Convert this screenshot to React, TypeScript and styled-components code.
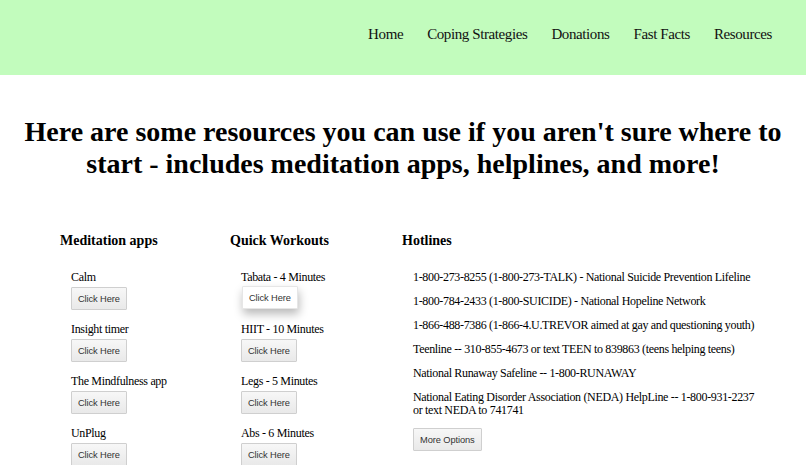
import React from "react";
import styled, { createGlobalStyle } from "styled-components";

const Global = createGlobalStyle`
  html, body { margin: 0; padding: 0; background: #fff; }
  body { font-family: "Liberation Serif", "Times New Roman", serif; color: #000; }
`;

const Header = styled.header`
  height: 75px;
  background: #c2fcbd;
  display: flex;
  align-items: center;
  justify-content: flex-end;
  padding-right: 34px;
  box-sizing: border-box;
`;

const Nav = styled.nav`
  display: flex;
  gap: 24px;
  margin-top: -6px;
`;

const NavLink = styled.a`
  font-size: 15px;
  letter-spacing: -0.4px;
  color: #111;
  text-decoration: none;
`;

const Title = styled.h1`
  margin: 41px 20px 0;
  text-align: center;
  font-size: 28px;
  line-height: 32px;
  font-weight: bold;
`;

const Columns = styled.div`
  display: grid;
  grid-template-columns: 170px 172px 356px;
  padding-left: 60px;
  margin-top: 51px;
`;

const Column = styled.section``;

const Heading = styled.h3`
  margin: 0 0 19px;
  font-size: 14px;
  line-height: 20px;
  font-weight: bold;
`;

const List = styled.ul<{ $offset?: number }>`
  list-style: none;
  margin: 0;
  padding-left: 11px;
  padding-top: ${(p) => p.$offset ?? 0}px;
`;

const Item = styled.li`
  font-size: 12px;
  letter-spacing: -0.33px;
  line-height: 14px;
  margin-bottom: 12px;
`;

const HotItem = styled.li`
  font-size: 12px;
  letter-spacing: -0.33px;
  line-height: 13px;
  margin-bottom: 11px;
`;

const Button = styled.button<{ $hover?: boolean }>`
  display: block;
  margin-top: 3px;
  height: 23px;
  padding: 0 6px;
  font-family: "Liberation Sans", Arial, sans-serif;
  font-size: 9.3px;
  letter-spacing: -0.1px;
  color: #333;
  border: 1px solid ${(p) => (p.$hover ? "#e6e6e6" : "#cfcfcf")};
  border-radius: 1px;
  background: ${(p) => (p.$hover ? "#fff" : "linear-gradient(#f7f7f7, #e9e9e9)")};
  box-shadow: ${(p) => (p.$hover ? "1px 5px 10px rgba(0,0,0,0.28)" : "none")};
  transform: ${(p) => (p.$hover ? "translate(1px, -1px)" : "none")};
`;

const apps = ["Calm", "Insight timer", "The Mindfulness app", "UnPlug"];
const workouts = ["Tabata - 4 Minutes", "HIIT - 10 Minutes", "Legs - 5 Minutes", "Abs - 6 Minutes"];
const hotlines = [
  "1-800-273-8255 (1-800-273-TALK) - National Suicide Prevention Lifeline",
  "1-800-784-2433 (1-800-SUICIDE) - National Hopeline Network",
  "1-866-488-7386 (1-866-4.U.TREVOR aimed at gay and questioning youth)",
  "Teenline -- 310-855-4673 or text TEEN to 839863 (teens helping teens)",
  "National Runaway Safeline -- 1-800-RUNAWAY",
  "National Eating Disorder Association (NEDA) HelpLine -- 1-800-931-2237 or text NEDA to 741741",
];

export default function App() {
  return (
    <>
      <Global />
      <Header>
        <Nav>
          {["Home", "Coping Strategies", "Donations", "Fast Facts", "Resources"].map((n) => (
            <NavLink key={n} href="#">{n}</NavLink>
          ))}
        </Nav>
      </Header>
      <Title>
        Here are some resources you can use if you aren't sure where to start - includes meditation apps, helplines, and more!
      </Title>
      <Columns>
        <Column>
          <Heading>Meditation apps</Heading>
          <List>
            {apps.map((a) => (
              <Item key={a}>
                {a}
                <Button>Click Here</Button>
              </Item>
            ))}
          </List>
        </Column>
        <Column>
          <Heading>Quick Workouts</Heading>
          <List>
            {workouts.map((w, i) => (
              <Item key={w}>
                {w}
                <Button $hover={i === 0}>Click Here</Button>
              </Item>
            ))}
          </List>
        </Column>
        <Column>
          <Heading>Hotlines</Heading>
          <List $offset={1}>
            {hotlines.map((h) => (
              <HotItem key={h}>{h}</HotItem>
            ))}
            <HotItem>
              <Button>More Options</Button>
            </HotItem>
          </List>
        </Column>
      </Columns>
    </>
  );
}
